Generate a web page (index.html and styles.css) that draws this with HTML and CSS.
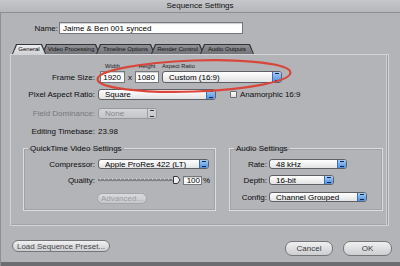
FILE: index.html
```html
<!DOCTYPE html>
<html lang="en">
<head>
    <meta charset="UTF-8">
    <meta name="viewport" content="width=device-width, initial-scale=1.0">
    <title>Sequence Settings</title>
    <link rel="stylesheet" href="styles.css">
</head>
<body>
    <div class="window">
        <div class="titlebar">Sequence Settings</div>

        <div class="name-row">
            <div class="name-label">Name:</div>
            <div class="field name-field">Jaime &amp; Ben 001 synced</div>
        </div>

        <div class="tabs">
            <div class="tab active" style="width:34px"><span>General</span></div>
            <div class="tab" style="width:58px"><span>Video Processing</span></div>
            <div class="tab" style="width:59px"><span>Timeline Options</span></div>
            <div class="tab" style="width:53px"><span>Render Control</span></div>
            <div class="tab" style="width:54px"><span>Audio Outputs</span></div>
        </div>

        <div class="panel">
            <!-- red marker drawn over the frame size row -->
            <svg class="highlight" width="204" height="38" viewBox="0 0 204 38">
                <ellipse cx="100" cy="18" rx="96.5" ry="15.5" transform="rotate(-2 100 18)" fill="none" stroke="#d8463c" stroke-width="2.2"/>
            </svg>

            <div class="row head-row">
                <div class="lbl"></div>
                <span class="head-w">Width</span>
                <span class="head-x"></span>
                <span class="head-h">Height</span>
                <span class="head-ar">Aspect Ratio</span>
            </div>

            <div class="row frame-row">
                <div class="lbl">Frame Size:</div>
                <div class="field num w-size">1920</div>
                <span class="times">x</span>
                <div class="field num h-size">1080</div>
                <div class="select sel-aspect"><span class="val">Custom (16:9)</span><span class="arrows"></span></div>
            </div>

            <div class="row par-row">
                <div class="lbl">Pixel Aspect Ratio:</div>
                <div class="select sel-par"><span class="val">Square</span><span class="arrows"></span></div>
                <span class="checkbox"></span>
                <span class="check-label">Anamorphic 16:9</span>
            </div>

            <div class="row field-row">
                <div class="lbl disabled">Field Dominance:</div>
                <div class="select sel-field is-disabled"><span class="val">None</span><span class="arrows"></span></div>
            </div>

            <div class="row base-row">
                <div class="lbl">Editing Timebase:</div>
                <span>23.98</span>
            </div>

            <div class="groups">
                <fieldset class="group qt-group">
                    <legend>QuickTime Video Settings</legend>
                    <div class="row g-row1">
                        <div class="lbl qt-lbl">Compressor:</div>
                        <div class="select sel-comp"><span class="val">Apple ProRes 422 (LT)</span><span class="arrows"></span></div>
                    </div>
                    <div class="row g-row2">
                        <div class="lbl qt-lbl quality-lbl">Quality:</div>
                        <svg class="slider" width="85" height="8" viewBox="0 0 85 8">
                            <line x1="1" y1="4" x2="80" y2="4" stroke="#4d4d50" stroke-width="1"/>
                            <line x1="3" y1="3" x2="78" y2="3" stroke="#e6e6e8" stroke-width="1" stroke-dasharray="1 3"/>
                            <line x1="3" y1="5" x2="78" y2="5" stroke="#8a8b8f" stroke-width="1" stroke-dasharray="1 3"/>
                            <path d="M76.5 0.5 h4 l2.5 3.5 l-2.5 3.5 h-4 z" fill="#eeeef0" stroke="#38383b" stroke-width="1"/>
                        </svg>
                        <div class="field num q-field">100</div>
                        <span class="pct">%</span>
                    </div>
                    <div class="btn btn-adv">Advanced...</div>
                </fieldset>

                <fieldset class="group audio-group">
                    <legend>Audio Settings</legend>
                    <div class="row g-row1">
                        <div class="lbl au-lbl">Rate:</div>
                        <div class="select sel-rate"><span class="val">48 kHz</span><span class="arrows"></span></div>
                    </div>
                    <div class="row a-row2">
                        <div class="lbl au-lbl">Depth:</div>
                        <div class="select sel-depth"><span class="val">16-bit</span><span class="arrows"></span></div>
                    </div>
                    <div class="row a-row3">
                        <div class="lbl au-lbl">Config:</div>
                        <div class="select sel-config"><span class="val">Channel Grouped</span><span class="arrows"></span></div>
                    </div>
                </fieldset>
            </div>
        </div>

        <div class="footer">
            <div class="btn btn-load">Load Sequence Preset...</div>
            <div class="actions">
                <div class="btn btn-cancel">Cancel</div>
                <div class="btn btn-ok">OK</div>
            </div>
        </div>
    </div>
</body>
</html>
```

FILE: styles.css
```css
* {
    box-sizing: border-box;
}
body {
    margin: 0;
    font-family: "Liberation Sans", Arial, sans-serif;
    font-size: 8px;
    line-height: 9px;
    color: #0d0d0d;
    background-color: #b3b4b8;
}
.window {
    width: 400px;
    height: 266px;
    overflow: hidden;
    background-color: #b3b4b8;
    box-shadow: inset 1px 0 #8e8f93, inset 0 -4px #6c6d71;
}
.titlebar {
    height: 13px;
    line-height: 12px;
    text-align: center;
    background: linear-gradient(#c6c7cb, #b6b7bb);
    border-bottom: 1px solid #8d8e92;
    color: #111;
}
.name-row {
    display: flex;
    align-items: center;
    height: 12px;
    margin-top: 9px;
}
.name-label {
    width: 58px;
    margin-right: 1px;
    text-align: right;
}
.field {
    display: flex;
    align-items: center;
    height: 12px;
    padding: 0 3px;
    background-color: #fff;
    border: 1px solid #76777b;
    box-shadow: inset 0 1px 1px rgba(0, 0, 0, 0.2);
    color: #000;
}
.name-field {
    width: 184px;
}
.num {
    justify-content: flex-end;
}

/* tabs */
.tabs {
    display: flex;
    height: 10px;
    margin-top: 10px;
    padding-left: 12px;
}
.tab {
    height: 10px;
    margin-left: -4px;
    padding: 1px 1px 0;
    background-color: #333438;
    clip-path: polygon(4px 0, calc(100% - 4px) 0, 100% 100%, 0 100%);
}
.tab:first-child {
    margin-left: 0;
}
.tab span {
    display: flex;
    align-items: center;
    justify-content: center;
    height: 9px;
    font-size: 6px;
    background: linear-gradient(#909196, #727378);
    clip-path: polygon(4px 0, calc(100% - 4px) 0, 100% 100%, 0 100%);
    color: #111;
}
.tab.active {
    z-index: 1;
}
.tab.active span {
    background: linear-gradient(#ededef, #d2d3d6);
    color: #000;
}

/* panel */
.panel {
    position: relative;
    width: 379px;
    height: 172px;
    margin-left: 10px;
    border: 1px solid #d3d4d7;
    box-shadow: inset -5px 0 0 -4px #9b9ca0, inset -6px 0 0 -4px #cfd0d3, inset 0 -1px #a3a4a8;
}
.highlight {
    position: absolute;
    left: 83px;
    top: 3px;
    z-index: 2;
}
.row {
    display: flex;
    align-items: center;
}
.lbl {
    width: 84px;
    margin-right: 3px;
    text-align: right;
}
.disabled {
    color: #77787c;
}
.head-row {
    height: 6px;
    margin-top: 8px;
    font-size: 5.8px;
    color: #1a1a1a;
}
.head-w {
    width: 25px;
    margin-left: 2px;
    text-align: center;
}
.head-x {
    width: 10px;
}
.head-h {
    width: 24px;
    text-align: center;
}
.head-ar {
    margin-left: 3px;
}
.frame-row {
    height: 12px;
    margin-top: 2px;
}
.w-size {
    width: 25px;
    margin-left: 2px;
}
.h-size {
    width: 24px;
}
.times {
    width: 10px;
    text-align: center;
}

/* popup menus */
.select {
    display: flex;
    align-items: center;
    height: 11px;
    border: 1px solid #5f6064;
    border-radius: 3px;
    background: linear-gradient(#ffffff, #e3e3e5);
    overflow: hidden;
}
.select .val {
    flex: 1;
    padding-left: 6px;
    white-space: nowrap;
    overflow: hidden;
    color: #000;
}
.select .arrows {
    width: 9px;
    height: 100%;
    border-left: 1px solid #3e6db3;
    background:
        linear-gradient(to top, transparent 50%, #0f2552 50%) 50% 1px / 4px 2px no-repeat,
        linear-gradient(to bottom, transparent 50%, #0f2552 50%) 50% calc(100% - 1px) / 4px 2px no-repeat,
        linear-gradient(#a6cdf6, #4e8fe0);
}
.is-disabled {
    border-color: #98999d;
    background: linear-gradient(#d4d5d8, #c4c5c8);
}
.is-disabled .val {
    color: #86878b;
}
.is-disabled .arrows {
    border-left: 1px solid #a0a1a5;
    background:
        linear-gradient(to top, transparent 50%, #3a3a3d 50%) 50% 1px / 4px 2px no-repeat,
        linear-gradient(to bottom, transparent 50%, #3a3a3d 50%) 50% calc(100% - 1px) / 4px 2px no-repeat,
        linear-gradient(#d4d5d8, #c4c5c8);
}
.sel-aspect {
    width: 120px;
    height: 12px;
    margin-left: 3px;
}
.par-row {
    height: 11px;
    margin-top: 6px;
}
.sel-par {
    width: 118px;
}
.checkbox {
    width: 7px;
    height: 7px;
    margin-left: 14px;
    margin-right: 3px;
    border: 1px solid #6c6d71;
    border-radius: 1px;
    background: linear-gradient(#ffffff, #dedee0);
}
.field-row {
    height: 11px;
    margin-top: 8px;
}
.sel-field {
    width: 59px;
}
.base-row {
    height: 10px;
    margin-top: 7px;
}

/* group boxes */
.groups {
    display: flex;
    gap: 13px;
    margin-top: 8px;
    padding-left: 12px;
}
.group {
    margin: 0;
    padding: 0 0 6px;
    border: 1px solid #dcdde0;
    box-shadow: inset 0 0 0 1px rgba(120, 121, 126, 0.3);
}
.group legend {
    margin-left: 4px;
    padding: 0 2px;
    line-height: 9px;
    color: #0d0d0d;
}
.qt-group {
    width: 193px;
}
.audio-group {
    width: 154px;
}
.qt-lbl {
    width: 71px;
}
.quality-lbl {
    margin-right: 2px;
}
.au-lbl {
    width: 37px;
    margin-right: 2px;
}
.g-row1 {
    height: 10px;
    margin-top: 6px;
}
.g-row1 .select,
.a-row2 .select,
.a-row3 .select {
    height: 10px;
}
.sel-comp {
    width: 111px;
}
.g-row2 {
    height: 8px;
    margin-top: 7px;
}
.slider {
    display: block;
}
.q-field {
    width: 19px;
    height: 9px;
    margin-left: 1px;
    padding: 0 1px;
}
.pct {
    margin-left: 1px;
}
.a-row2 {
    height: 10px;
    margin-top: 6px;
}
.a-row3 {
    height: 10px;
    margin-top: 7px;
}
.sel-rate {
    width: 78px;
}
.sel-depth {
    width: 65px;
}
.sel-config {
    width: 98px;
}

/* buttons */
.btn {
    display: flex;
    align-items: center;
    justify-content: center;
    height: 12px;
    border: 1px solid #75767a;
    border-radius: 7px;
    background: linear-gradient(#f0f0f1, #cdced0);
    color: #3b3b3d;
    white-space: nowrap;
}
.btn-adv {
    width: 50px;
    height: 11px;
    margin-top: 9px;
    margin-left: 73px;
    border-color: #a4a5a9;
    background: linear-gradient(#d9dadc, #c6c7ca);
    color: #9c9da1;
}
.footer {
    display: flex;
    justify-content: space-between;
    align-items: flex-start;
    margin-top: 14px;
    padding: 0 8px 0 12px;
}
.btn-load {
    width: 98px;
    color: #48484b;
}
.actions {
    display: flex;
    gap: 10px;
    margin-top: 1px;
}
.btn-cancel {
    width: 48px;
    height: 15px;
}
.btn-ok {
    width: 49px;
    height: 15px;
}
```
